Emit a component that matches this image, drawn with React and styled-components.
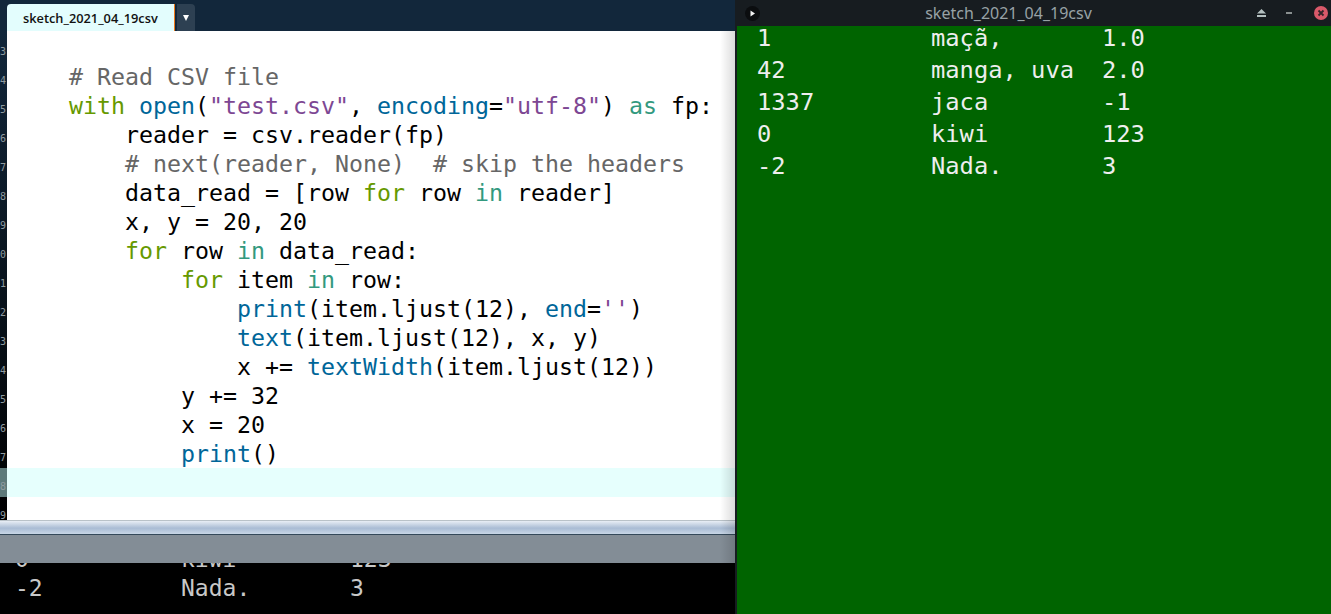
import React from "react";
import styled, { createGlobalStyle } from "styled-components";

const GlobalStyle = createGlobalStyle`
  html, body {
    margin: 0;
    padding: 0;
    height: 100%;
    background: #000;
  }
  body {
    overflow: hidden;
  }
`;

const COMMENT = "#666666";
const KEYWORD = "#669900";
const FUNC = "#006699";
const STRING = "#7d4793";
const OPERATOR = "#33997e";

const kinds = { c: COMMENT, k: KEYWORD, f: FUNC, s: STRING, o: OPERATOR };

// [kind, text] pairs, a plain string is just black text
const codeLines = [
  { n: 13, parts: [] },
  { n: 14, parts: [["c", "    # Read CSV file"]] },
  { n: 15, parts: [["k", "    with"], " ", ["f", "open"], "(", ["s", '"test.csv"'], ", ", ["f", "encoding"], "=", ["s", '"utf-8"'], ") ", ["o", "as"], " fp:"] },
  { n: 16, parts: ["        reader = csv.reader(fp)"] },
  { n: 17, parts: [["c", "        # next(reader, None)  # skip the headers"]] },
  { n: 18, parts: ["        data_read = [row ", ["k", "for"], " row ", ["o", "in"], " reader]"] },
  { n: 19, parts: ["        x, y = 20, 20"] },
  { n: 20, parts: [["k", "        for"], " row ", ["o", "in"], " data_read:"] },
  { n: 21, parts: [["k", "            for"], " item ", ["o", "in"], " row:"] },
  { n: 22, parts: ["                ", ["f", "print"], "(item.ljust(12), ", ["f", "end"], "=", ["s", "''"], ")"] },
  { n: 23, parts: ["                ", ["f", "text"], "(item.ljust(12), x, y)"] },
  { n: 24, parts: ["                x += ", ["f", "textWidth"], "(item.ljust(12))"] },
  { n: 25, parts: ["            y += 32"] },
  { n: 26, parts: ["            x = 20"] },
  { n: 27, parts: ["            ", ["f", "print"], "()"] },
  { n: 28, parts: [], current: true },
  { n: 29, parts: [] },
];

const tableRows = [
  ["1", "maçã,", "1.0"],
  ["42", "manga, uva", "2.0"],
  ["1337", "jaca", "-1"],
  ["0", "kiwi", "123"],
  ["-2", "Nada.", "3"],
];

const App = () => {
  return (
    <Desktop>
      <GlobalStyle />
      <IdeWindow>
        <TabBar>
          <Tab>sketch_2021_04_19csv</Tab>
          <TabMenu>
            <svg width="6" height="6" viewBox="0 0 6 6">
              <path d="M0 0h6L3 6z" fill="#fff" />
            </svg>
          </TabMenu>
        </TabBar>
        <EditorRow>
          <Gutter>
            {codeLines.map((line) => (
              <LineNumber key={line.n} $current={line.current}>{line.n}</LineNumber>
            ))}
          </Gutter>
          <Code>
            {codeLines.map((line) => (
              <CodeLine key={line.n} $current={line.current}>
                {line.parts.map((part, i) =>
                  typeof part === "string" ? (
                    part
                  ) : (
                    <Token key={i} $color={kinds[part[0]]}>{part[1]}</Token>
                  )
                )}
              </CodeLine>
            ))}
          </Code>
        </EditorRow>
        <Splitter />
        <StatusBar />
        <Console>
          <ConsoleRow>
            <span>0</span>
            <span>kiwi</span>
            <span>123</span>
          </ConsoleRow>
          <ConsoleRow>
            <span>-2</span>
            <span>Nada.</span>
            <span>3</span>
          </ConsoleRow>
        </Console>
      </IdeWindow>
      <SketchWindow>
        <TitleBar>
          <RunIcon>
            <svg width="15" height="15" viewBox="0 0 15 15">
              <circle cx="7.5" cy="7.5" r="7.5" fill="#0b0d0f" />
              <path d="M5.5 4.5l4.5 3-4.5 3z" fill="#f2f2f2" />
            </svg>
          </RunIcon>
          <Title>sketch_2021_04_19csv</Title>
          <WindowButtons>
            <svg width="9" height="8" viewBox="0 0 9 8">
              <path d="M4.5 0L9 4.5H0z M0 6h9v2H0z" fill="#b4c0c0" />
            </svg>
            <svg width="8" height="2" viewBox="0 0 8 2">
              <rect width="6" height="2" fill="#8a9090" />
            </svg>
            <svg width="14" height="14" viewBox="0 0 14 14">
              <circle cx="7" cy="7" r="7" fill="#d9596a" />
              <path d="M4.5 4.5l5 5M9.5 4.5l-5 5" stroke="#33252a" strokeWidth="1.8" />
            </svg>
          </WindowButtons>
        </TitleBar>
        <Canvas>
          {tableRows.map((row) => (
            <CanvasRow key={row[0]}>
              <span>{row[0]}</span>
              <span>{row[1]}</span>
              <span>{row[2]}</span>
            </CanvasRow>
          ))}
        </Canvas>
      </SketchWindow>
    </Desktop>
  );
};

const MONO = `"DejaVu Sans Mono", monospace`;

const Desktop = styled.div`
  display: flex;
  width: 1331px;
  height: 614px;
  overflow: hidden;
  background: #171c20;
`;

const IdeWindow = styled.div`
  position: relative;
  display: flex;
  flex-direction: column;
  width: 735px;
  height: 614px;
  overflow: hidden;
  &::after {
    content: "";
    position: absolute;
    top: 31px;
    right: 0;
    bottom: 51px;
    width: 15px;
    background: linear-gradient(to right, rgba(0, 0, 0, 0), rgba(0, 0, 0, 0.14));
    pointer-events: none;
  }
`;

const TabBar = styled.div`
  display: flex;
  align-items: flex-end;
  height: 31px;
  padding-left: 7px;
  background: #12273b;
`;

const Tab = styled.div`
  width: 168px;
  height: 27px;
  padding-left: 16px;
  box-sizing: border-box;
  border-right: 1px solid #f07a1a;
  border-radius: 4px 0 0 0;
  background: #e3fdfd;
  color: #111;
  font: 600 12.8px/28px "Open Sans", sans-serif;
`;

const TabMenu = styled.div`
  display: flex;
  align-items: center;
  justify-content: center;
  width: 18px;
  height: 27px;
  margin-left: 2px;
  border-radius: 0 4px 0 0;
  background: #2d4052;
`;

const EditorRow = styled.div`
  display: flex;
  height: 489px;
  overflow: hidden;
  background: #fff;
`;

const Gutter = styled.div`
  flex: 0 0 7px;
  width: 7px;
  padding-top: 2px;
  overflow: hidden;
  background: linear-gradient(to bottom, #12273b, #000);
`;

const LineNumber = styled.div`
  display: flex;
  justify-content: flex-end;
  height: 29px;
  padding-right: 1px;
  box-sizing: border-box;
  background: ${(p) => (p.$current ? "#5e7a7a" : "transparent")};
  color: #8f9ba0;
  font: 10px/38px ${MONO};
`;

const Code = styled.div`
  flex: 1;
  padding-top: 2px;
  min-width: 0;
`;

const CodeLine = styled.div`
  height: 29px;
  padding-left: 6px;
  background: ${(p) => (p.$current ? "#e6fffd" : "transparent")};
  color: #000;
  font: 23.25px/29px ${MONO};
  white-space: pre;
`;

const Token = styled.span`
  color: ${(p) => p.$color};
`;

const Splitter = styled.div`
  height: 15px;
  box-sizing: border-box;
  border-top: 1px solid #b9c2c8;
  border-bottom: 1px solid #34495a;
  background: linear-gradient(to bottom, #e8eef5, #a9bcd4 55%, #c8d6e6);
`;

const StatusBar = styled.div`
  height: 28px;
  background: #838d96;
`;

const Console = styled.div`
  flex: 1;
  overflow: hidden;
  background: #000;
  padding-left: 15px;
`;

const ConsoleRow = styled.div`
  display: grid;
  grid-template-columns: 166px 169px 1fr;
  height: 29px;
  color: #c8c8c8;
  font: 23px/29px ${MONO};
  white-space: pre;
  &:first-child {
    margin-top: -18px;
  }
`;

const SketchWindow = styled.div`
  display: flex;
  flex-direction: column;
  width: 594px;
  height: 614px;
  margin-left: 2px;
`;

const TitleBar = styled.div`
  display: flex;
  align-items: center;
  flex: 0 0 26px;
  padding: 0 3px 0 8px;
  background: #171c20;
`;

const RunIcon = styled.div`
  display: flex;
`;

const Title = styled.div`
  flex: 1;
  text-align: center;
  color: #98a2a6;
  font: 16px/26px "Noto Sans", sans-serif;
`;

const WindowButtons = styled.div`
  display: flex;
  align-items: center;
  gap: 20px;
`;

const Canvas = styled.div`
  flex: 1;
  padding: 0 0 0 20px;
  background: #006400;
`;

const CanvasRow = styled.div`
  display: grid;
  grid-template-columns: 174px 171px 1fr;
  height: 32px;
  color: #eeeeee;
  font: 23.75px/25px ${MONO};
  white-space: pre;
`;

export default App;
